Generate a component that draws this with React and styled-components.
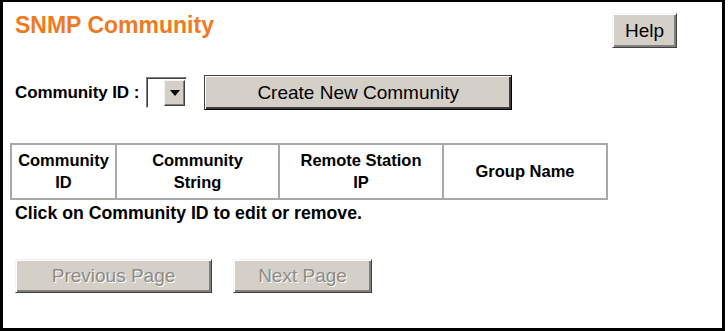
import styled, { createGlobalStyle } from "styled-components";

const GlobalStyle = createGlobalStyle`
  html, body {
    margin: 0;
    padding: 0;
    background: #ffffff;
  }
  body {
    font-family: "Liberation Sans", Arial, sans-serif;
  }
`;

const App = () => {
  return (
    <>
      <GlobalStyle />
      <Frame>
        <Header>
          <Title>SNMP Community</Title>
          <Button $width={65} $height={35} $mt={1}>
            Help
          </Button>
        </Header>

        <Toolbar>
          <Label>Community ID :</Label>
          <Select>
            <SelectValue />
            <SelectArrow>
              <Triangle />
            </SelectArrow>
          </Select>
          <Button $width={308} $height={35} $default>
            Create New Community
          </Button>
        </Toolbar>

        <Table>
          <colgroup>
            <col style={{ width: 105 }} />
            <col style={{ width: 163 }} />
            <col style={{ width: 164 }} />
            <col style={{ width: 164 }} />
          </colgroup>
          <thead>
            <tr>
              <Th>
                Community
                <br />
                ID
              </Th>
              <Th>
                Community
                <br />
                String
              </Th>
              <Th>
                Remote Station
                <br />
                IP
              </Th>
              <Th>Group Name</Th>
            </tr>
          </thead>
        </Table>

        <Hint>Click on Community ID to edit or remove.</Hint>

        <Pager>
          <Button $width={197} $height={34} disabled>
            Previous Page
          </Button>
          <Button $width={139} $height={34} disabled>
            Next Page
          </Button>
        </Pager>
      </Frame>
    </>
  );
};

const Frame = styled.div`
  box-sizing: border-box;
  width: 725px;
  height: 331px;
  border: 3px solid #000;
  border-top-width: 2px;
  padding: 10px 45px 0 12px;
  display: flex;
  flex-direction: column;
`;

const Header = styled.div`
  display: flex;
  justify-content: space-between;
  align-items: flex-start;
`;

const Title = styled.h1`
  margin: 0;
  font-size: 23px;
  line-height: 27px;
  font-weight: bold;
  color: #ef7a22;
`;

const Button = styled.button`
  box-sizing: border-box;
  width: ${(p) => p.$width}px;
  height: ${(p) => p.$height}px;
  margin-top: ${(p) => p.$mt || 0}px;
  padding: 0;
  font-family: "Liberation Sans", Arial, sans-serif;
  font-size: 19px;
  color: #000;
  background: #d4d0c8;
  border: 1px solid;
  border-color: ${(p) =>
    p.$default ? "#404040 #000 #000 #404040" : "#f4f4f4 #404040 #404040 #f4f4f4"};
  box-shadow: ${(p) =>
    p.$default
      ? "inset 1px 1px #ffffff, inset -2px -2px #404040"
      : "inset 1px 1px #ffffff, inset -2px -2px #808080"};
  &:disabled {
    color: #8c8a86;
    text-shadow: 1px 1px #ffffff;
  }
`;

const Toolbar = styled.div`
  display: flex;
  align-items: center;
  height: 35px;
  margin-top: 27px;
`;

const Label = styled.span`
  font-size: 17px;
  font-weight: bold;
  margin-right: 7px;
  letter-spacing: -0.1px;
`;

const Select = styled.div`
  box-sizing: border-box;
  width: 41px;
  height: 31px;
  display: flex;
  border: 1px solid;
  border-color: #808080 #ffffff #ffffff #808080;
  box-shadow: inset 1px 1px #404040;
  background: #fff;
  margin-right: 17px;
`;

const SelectValue = styled.div`
  flex: 1;
`;

const SelectArrow = styled.div`
  box-sizing: border-box;
  width: 21px;
  margin: 2px 1px 1px 0;
  background: #d4d0c8;
  border: 1px solid;
  border-color: #f4f4f4 #404040 #404040 #f4f4f4;
  box-shadow: inset -1px -1px #808080;
  display: flex;
  align-items: center;
  justify-content: center;
`;

const Triangle = styled.span`
  width: 0;
  height: 0;
  border-left: 5px solid transparent;
  border-right: 5px solid transparent;
  border-top: 6px solid #000;
`;

const Table = styled.table`
  box-sizing: border-box;
  width: 596px;
  margin: 33px 0 0 -5px;
  table-layout: fixed;
  border-collapse: collapse;
  border: 2px solid #a8a8a8;
`;

const Th = styled.th`
  border: 2px solid #a8a8a8;
  padding: 4px 2px 5px;
  font-size: 16.5px;
  line-height: 22px;
  font-weight: bold;
  text-align: center;
  vertical-align: middle;
  color: #000;
`;

const Hint = styled.p`
  margin: 3px 0 0;
  font-size: 17.7px;
  line-height: 20px;
  font-weight: bold;
`;

const Pager = styled.div`
  display: flex;
  gap: 21px;
  margin-top: 36px;
`;

export default App;
